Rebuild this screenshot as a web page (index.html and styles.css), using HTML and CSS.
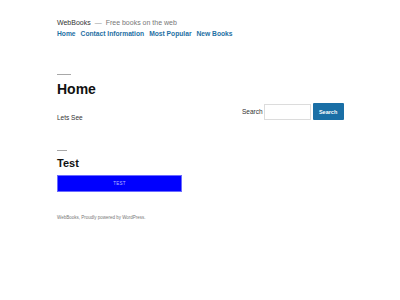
FILE: index.html
```html
<!DOCTYPE html>
<html>
<head>
<meta charset="utf-8">
<link rel="stylesheet" href="styles.css">
</head>
<body>
<div class="page">
  <header class="site-header">
    <div class="branding">
      <span class="site-title">WebBooks</span>
      <span class="dash">—</span>
      <span class="site-desc">Free books on the web</span>
    </div>
    <nav class="nav">
      <a href="#">Home</a>
      <a href="#">Contact Information</a>
      <a href="#">Most Popular</a>
      <a href="#">New Books</a>
    </nav>
  </header>
  <div class="layout">
    <main class="content">
      <article class="entry">
        <div class="sep"></div>
        <h1 class="entry-title">Home</h1>
        <p class="entry-text">Lets See</p>
      </article>
      <section class="entry">
        <div class="sep sep-short"></div>
        <h2 class="entry-title small">Test</h2>
        <div class="test-box">TEST</div>
      </section>
      <footer class="site-footer">WebBooks, Proudly powered by WordPress.</footer>
    </main>
    <aside class="sidebar">
      <form class="search">
        <label class="search-label">Search</label>
        <input class="search-input" type="text">
        <button class="search-btn" type="button">Search</button>
      </form>
    </aside>
  </div>
</div>
</body>
</html>
```
FILE: styles.css
```css
html, body {
  margin: 0;
  background: #ffffff;
}
body {
  font-family: "Liberation Sans", Arial, sans-serif;
  color: #222;
}
.page {
  padding: 18px 0 0 57px;
}
.branding {
  font-size: 7px;
  line-height: 9px;
  white-space: nowrap;
}
.site-title {
  color: #333;
}
.dash {
  color: #999;
  margin: 0 2px;
}
.site-desc {
  color: #777;
}
.nav {
  margin-top: 2px;
  display: flex;
  gap: 5px;
  font-size: 6.7px;
  line-height: 10px;
  font-weight: 700;
}
.nav a {
  color: #1e6fa3;
  text-decoration: none;
}
.layout {
  margin-top: 35px;
  display: grid;
  grid-template-columns: 185px auto;
}
.sep {
  width: 14px;
  height: 1px;
  background: #a8a8a8;
}
.sep-short {
  width: 10px;
}
.entry-title {
  margin: 6px 0 0 0;
  font-size: 14px;
  line-height: 16px;
  font-weight: 700;
  color: #111;
}
.entry-title.small {
  font-size: 11px;
  line-height: 13px;
}
.entry-text {
  margin: 16px 0 0 0;
  font-size: 6.5px;
  line-height: 9px;
  color: #333;
}
.entry + .entry {
  margin-top: 28px;
}
.test-box {
  margin-top: 5px;
  width: 123px;
  height: 15px;
  background: #0000ff;
  border: 1px solid #6b6bff;
  color: #b8b8ff;
  font-size: 4.5px;
  display: flex;
  align-items: center;
  justify-content: center;
  letter-spacing: 0.2px;
}
.site-footer {
  margin-top: 22px;
  font-size: 4.5px;
  line-height: 7px;
  color: #777;
}
.sidebar {
  padding-top: 29px;
}
.search {
  display: flex;
  align-items: center;
  margin: 0;
}
.search-label {
  font-size: 6.5px;
  color: #333;
  margin-right: 1px;
}
.search-input {
  box-sizing: border-box;
  width: 47px;
  height: 16px;
  border: 1px solid #dcdcdc;
  padding: 0;
  margin: 0;
  background: #fff;
}
.search-btn {
  box-sizing: border-box;
  margin-left: 2px;
  width: 31px;
  height: 17px;
  border: none;
  border-radius: 1px;
  background: #1a6fa6;
  color: #fff;
  font-family: "Liberation Sans", Arial, sans-serif;
  font-size: 5.5px;
  font-weight: 700;
  padding: 0;
}
```
